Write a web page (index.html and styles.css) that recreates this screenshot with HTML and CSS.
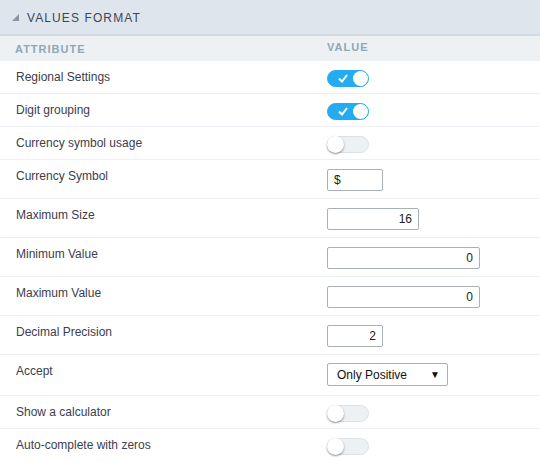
FILE: index.html
```html
<!DOCTYPE html>
<html>
<head>
<meta charset="utf-8">
<link rel="stylesheet" href="styles.css">
</head>
<body>
<div class="panel">
  <div class="title"><span class="tri"></span><span class="title-text">VALUES FORMAT</span></div>
  <div class="row head"><div class="attr">ATTRIBUTE</div><div class="val">VALUE</div></div>
  <div class="row sw"><div class="attr">Regional Settings</div><div class="val"><span class="toggle on"><svg class="check" width="10" height="9" viewBox="0 0 10 9"><polyline points="1,4.5 4,7.5 9,1" fill="none" stroke="#fff" stroke-width="2"/></svg><span class="knob"></span></span></div></div>
  <div class="row sw"><div class="attr">Digit grouping</div><div class="val"><span class="toggle on"><svg class="check" width="10" height="9" viewBox="0 0 10 9"><polyline points="1,4.5 4,7.5 9,1" fill="none" stroke="#fff" stroke-width="2"/></svg><span class="knob"></span></span></div></div>
  <div class="row sw"><div class="attr">Currency symbol usage</div><div class="val"><span class="toggle"><span class="knob"></span></span></div></div>
  <div class="row in"><div class="attr">Currency Symbol</div><div class="val"><span class="input w56 left">$</span></div></div>
  <div class="row in"><div class="attr">Maximum Size</div><div class="val"><span class="input w92">16</span></div></div>
  <div class="row in"><div class="attr">Minimum Value</div><div class="val"><span class="input w153">0</span></div></div>
  <div class="row in"><div class="attr">Maximum Value</div><div class="val"><span class="input w153">0</span></div></div>
  <div class="row in"><div class="attr">Decimal Precision</div><div class="val"><span class="input w56">2</span></div></div>
  <div class="row sel"><div class="attr">Accept</div><div class="val"><span class="select">Only Positive<span class="arrow">▼</span></span></div></div>
  <div class="row sw"><div class="attr">Show a calculator</div><div class="val"><span class="toggle"><span class="knob"></span></span></div></div>
  <div class="row sw last"><div class="attr">Auto-complete with zeros</div><div class="val"><span class="toggle"><span class="knob"></span></span></div></div>
</div>
</body>
</html>
```

FILE: styles.css
```css
* { box-sizing: border-box; }
html, body { margin: 0; padding: 0; background: #fff; }
body { font-family: Arial, "Liberation Sans", sans-serif; font-size: 12px; color: #3d3d4c; }
.panel { width: 540px; }
.title {
  height: 36px;
  background: #dfe5ec;
  border-bottom: 2px solid #d2dbe1;
  display: flex;
  align-items: center;
  padding-left: 12px;
}
.tri {
  width: 0; height: 0;
  border-left: 7px solid transparent;
  border-bottom: 7px solid #8b95a3;
  margin-right: 8px;
  margin-top: 1px;
}
.title-text {
  font-size: 12px;
  letter-spacing: 1.1px;
  color: #3c4658;
  margin-top: 1px;
}
.row {
  display: flex;
  border-bottom: 1px solid #eceff4;
  padding: 8px 0 0 0;
}
.row.last { border-bottom: none; }
.attr { width: 327px; padding-left: 16px; line-height: 16px; }
.val { flex: 1; }
.head {
  background: #edf1f4;
  height: 25px;
  border-bottom: none;
  padding-top: 5px;
  font-size: 11px;
  font-weight: bold;
  color: #8fa7b9;
  letter-spacing: 1px;
}
.head .attr { padding-left: 15px; }
.sw { height: 33px; }
.in { height: 39px; }
.sel { height: 41px; }
.toggle {
  display: block;
  position: relative;
  width: 42px;
  height: 17px;
  margin-top: 1px;
  border-radius: 9px;
  background: #edf1f4;
  border: 1px solid #dbe2e7;
}
.toggle.on { background: #25abf0; border-color: #25abf0; }
.knob {
  position: absolute;
  top: -1px; left: -1px;
  width: 17px; height: 17px;
  border-radius: 50%;
  background: #fff;
  box-shadow: 0 1px 2px rgba(0,0,0,0.45);
}
.toggle.on .knob {
  left: auto; right: 0; top: 0;
  width: 15px; height: 15px;
  box-shadow: none;
}
.check {
  position: absolute;
  left: 10px; top: 3px;
  display: block;
}
.input {
  display: block;
  height: 22px;
  margin-top: 1px;
  border: 1px solid #a9b0b8;
  border-radius: 2px;
  background: #fff;
  font-size: 12px;
  line-height: 20px;
  text-align: right;
  padding: 0 6px;
  color: #222;
}
.input.left { text-align: left; }
.w56 { width: 56px; }
.w92 { width: 92px; }
.w153 { width: 153px; }
.select {
  display: flex;
  justify-content: space-between;
  align-items: center;
  width: 121px;
  height: 23px;
  border: 1px solid #a9b0b8;
  border-radius: 2px;
  padding: 0 7px 0 9px;
  font-size: 12px;
  color: #111;
}
.arrow { font-size: 10px; color: #111; }
```
